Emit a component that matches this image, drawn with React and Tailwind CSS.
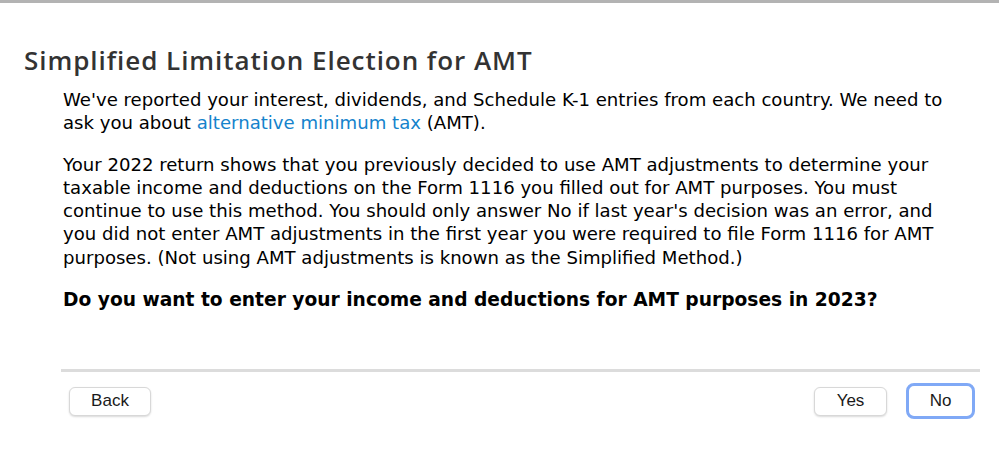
export default function App() {
  return (
    <div className="w-[999px] h-[467px] bg-white relative overflow-hidden">
      <div className="h-[3px] bg-[#b3b3b3]" />
      <div className="pl-[24px] pt-[41px]">
        <h1 className="text-[26px] leading-[32px] font-semibold text-[#333333] tracking-[0.95px]" style={{ fontFamily: '"Open Sans", sans-serif' }}>
          Simplified Limitation Election for AMT
        </h1>
        <div className="ml-[39px] w-[895px] pt-[12px] text-[18.1px] leading-[23.3px] text-black" style={{ fontFamily: '"DejaVu Sans", sans-serif' }}>
          <p>
            We've reported your interest, dividends, and Schedule K-1 entries from each country. We need to ask you about{' '}
            <span className="text-[#1583cc]">alternative minimum tax</span> (AMT).
          </p>
          <p className="mt-[18px]">
            Your 2022 return shows that you previously decided to use AMT adjustments to determine your taxable income and deductions on the Form 1116 you filled out for AMT purposes. You must continue to use this method. You should only answer No if last year's decision was an error, and you did not enter AMT adjustments in the first year you were required to file Form 1116 for AMT purposes. (Not using AMT adjustments is known as the Simplified Method.)
          </p>
          <p className="mt-[19px] font-bold text-[18.65px]">
            Do you want to enter your income and deductions for AMT purposes in 2023?
          </p>
        </div>
      </div>
      <div className="absolute left-[61px] top-[369px] w-[919px]">
        <div className="h-[3px] bg-[#dcdcdc]" />
        <div className="flex items-center justify-between mt-[11px] pl-[8px] pr-[5px]" style={{ fontFamily: '"Liberation Sans", sans-serif' }}>
          <button className="w-[82px] h-[29px] rounded-[6px] bg-white border border-[#d8d8d8] shadow-[0_1px_2px_rgba(0,0,0,0.15)] text-[17px] text-[#1a1a1a]">Back</button>
          <div className="flex items-center gap-[19px]">
            <button className="w-[73px] h-[29px] rounded-[6px] bg-white border border-[#d8d8d8] shadow-[0_1px_2px_rgba(0,0,0,0.15)] text-[17px] text-[#1a1a1a]">Yes</button>
            <button className="w-[69px] h-[36px] rounded-[8px] bg-white border-[3px] border-[#80a9f6] text-[17px] text-[#1a1a1a]">No</button>
          </div>
        </div>
      </div>
    </div>
  );
}
